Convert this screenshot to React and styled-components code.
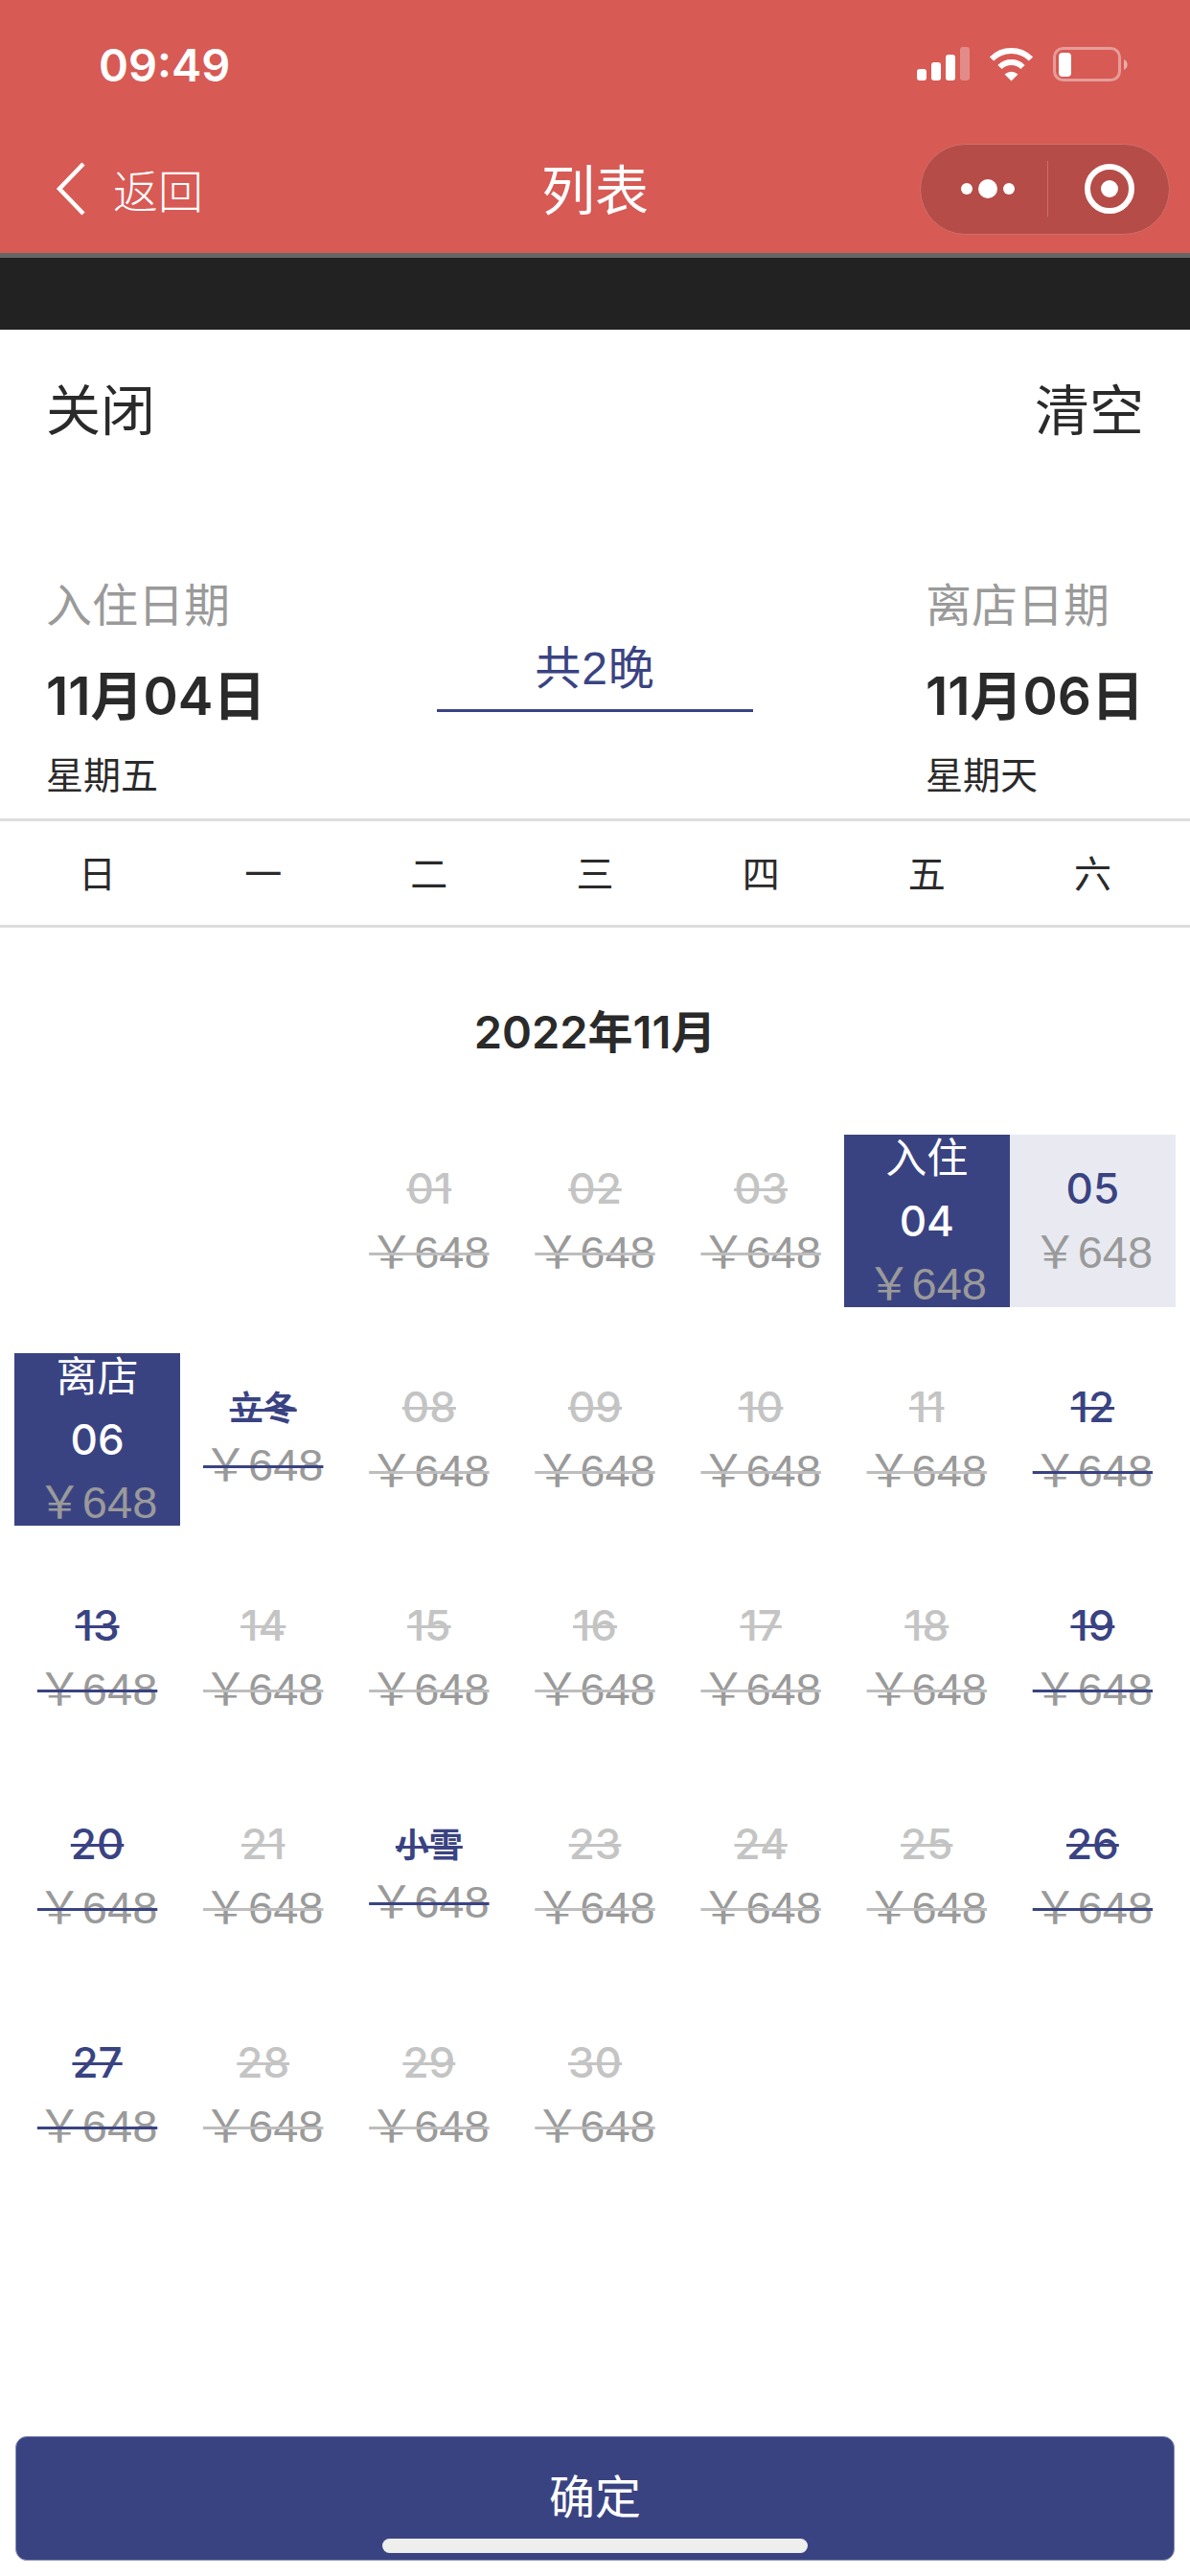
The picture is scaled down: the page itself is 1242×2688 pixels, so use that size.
import styled, { createGlobalStyle } from 'styled-components';

const NAVY = '#3a4382';
const FONT = `"Liberation Sans", "Noto Sans CJK SC", sans-serif`;
const NUM_FONT = `Inter, "Noto Sans CJK SC", sans-serif`;

const WEEK = ['日', '一', '二', '三', '四', '五', '六'];
const FESTIVALS = { 7: '立冬', 22: '小雪' };
const WEEKENDS = [12, 13, 19, 20, 26, 27];

const pad = (n) => String(n).padStart(2, '0');

export default function App() {
  const days = Array.from({ length: 30 }, (_, i) => i + 1);

  return (
    <>
      <GlobalStyle />
      <Page>
        <Header>
          <StatusBar>
            <Clock>09:49</Clock>
            <StatusIcons>
              <svg width="55" height="36" viewBox="0 0 55 36">
                <rect x="0" y="23" width="10" height="12" rx="3" fill="#fff" />
                <rect x="15" y="16" width="10" height="19" rx="3" fill="#fff" />
                <rect x="30" y="8" width="10" height="27" rx="3" fill="#fff" />
                <rect x="45" y="0" width="10" height="35" rx="3" fill="#fff" opacity="0.3" />
              </svg>
              <svg width="47" height="36" viewBox="0 0 47 36">
                <path d="M3 12.5 A29 29 0 0 1 44 12.5" fill="none" stroke="#fff" strokeWidth="6" />
                <path d="M11.5 21 A17 17 0 0 1 35.5 21" fill="none" stroke="#fff" strokeWidth="6" />
                <path d="M16.5 28.5 Q23.5 23 30.5 28.5 L23.5 35.5 Z" fill="#fff" />
              </svg>
              <svg width="79" height="36" viewBox="0 0 79 36">
                <rect x="1.5" y="1.5" width="68" height="33" rx="9" fill="none" stroke="#fff" strokeWidth="3" opacity="0.4" />
                <rect x="6" y="6" width="13" height="25" rx="4" fill="#fff" />
                <path d="M74 13 A6 6 0 0 1 74 24 Z" fill="#fff" opacity="0.5" />
              </svg>
            </StatusIcons>
          </StatusBar>
          <NavBar>
            <BackLink>
              <svg width="32" height="56" viewBox="0 0 32 56">
                <path d="M29 2 L4 28 L29 54" fill="none" stroke="#fff" strokeWidth="4.5" />
              </svg>
              <BackText>返回</BackText>
            </BackLink>
            <NavTitle>列表</NavTitle>
            <Capsule>
              <CapsuleSide $inset={8}>
                <svg width="56" height="22" viewBox="0 0 56 22">
                  <circle cx="6" cy="11" r="6" fill="#fff" />
                  <circle cx="28" cy="11" r="10" fill="#fff" />
                  <circle cx="50" cy="11" r="6" fill="#fff" />
                </svg>
              </CapsuleSide>
              <CapsuleDivider />
              <CapsuleSide $inset={3}>
                <svg width="52" height="52" viewBox="0 0 52 52">
                  <circle cx="26" cy="26" r="23" fill="none" stroke="#fff" strokeWidth="6" />
                  <circle cx="26" cy="26" r="9" fill="#fff" />
                </svg>
              </CapsuleSide>
            </Capsule>
          </NavBar>
        </Header>
        <DarkStrip />

        <ActionRow>
          <ActionText>关闭</ActionText>
          <ActionText>清空</ActionText>
        </ActionRow>

        <StaySummary>
          <StayColumn>
            <StayLabel>入住日期</StayLabel>
            <StayDate>11月04日</StayDate>
            <StayWeekday>星期五</StayWeekday>
          </StayColumn>
          <NightsColumn>
            <NightsText>共2晚</NightsText>
          </NightsColumn>
          <StayColumn>
            <StayLabel>离店日期</StayLabel>
            <StayDate>11月06日</StayDate>
            <StayWeekday>星期天</StayWeekday>
          </StayColumn>
        </StaySummary>

        <WeekRow>
          {WEEK.map((d) => (
            <WeekDay key={d}>{d}</WeekDay>
          ))}
        </WeekRow>

        <MonthTitle>2022年11月</MonthTitle>

        <CalendarGrid>
          <div />
          <div />
          {days.map((day) => {
            if (day === 4 || day === 6) {
              return (
                <DayCell key={day} $bg={NAVY}>
                  <EdgeLabel>{day === 4 ? '入住' : '离店'}</EdgeLabel>
                  <DayNumber $color="#fff">{pad(day)}</DayNumber>
                  <TightPrice>￥648</TightPrice>
                </DayCell>
              );
            }
            if (day === 5) {
              return (
                <DayCell key={day} $bg="#e9eaf1">
                  <DayNumber $color={NAVY}>{pad(day)}</DayNumber>
                  <Price>￥648</Price>
                </DayCell>
              );
            }
            if (FESTIVALS[day]) {
              return (
                <DayCell key={day}>
                  <FestivalName>{FESTIVALS[day]}</FestivalName>
                  <TightPrice $strike={NAVY}>￥648</TightPrice>
                </DayCell>
              );
            }
            const bookable = WEEKENDS.includes(day);
            return (
              <DayCell key={day}>
                <DayNumber $color={bookable ? NAVY : '#c4c4c4'} $strike={bookable ? NAVY : '#c4c4c4'}>
                  {pad(day)}
                </DayNumber>
                <Price $strike={bookable ? NAVY : '#bdbdbd'}>￥648</Price>
              </DayCell>
            );
          })}
        </CalendarGrid>

        <ConfirmButton>确定</ConfirmButton>
        <HomeIndicator />
      </Page>
    </>
  );
}

const GlobalStyle = createGlobalStyle`
  html, body {
    margin: 0;
    padding: 0;
    background: #fff;
  }
  * {
    box-sizing: border-box;
  }
`;

const Page = styled.div`
  position: relative;
  display: flex;
  flex-direction: column;
  width: 1242px;
  height: 2688px;
  overflow: hidden;
  background: #fff;
  font-family: ${FONT};
  color: #222;
`;

const Header = styled.header`
  height: 269px;
  background: #d75a55;
  border-bottom: 5px solid #666;
  color: #fff;
`;

const StatusBar = styled.div`
  display: flex;
  justify-content: space-between;
  align-items: flex-start;
  height: 136px;
  padding: 49px 64px 0 103px;
`;

const Clock = styled.span`
  font-family: ${NUM_FONT};
  font-size: 47px;
  font-weight: 600;
  line-height: 38px;
`;

const StatusIcons = styled.div`
  display: flex;
  align-items: flex-start;
  gap: 20px;
`;

const NavBar = styled.nav`
  display: grid;
  grid-template-columns: 1fr auto 1fr;
  align-items: center;
  height: 128px;
  padding: 0 21px 6px;
`;

const BackLink = styled.div`
  display: flex;
  align-items: center;
  gap: 28px;
  margin-left: 37px;
`;

const BackText = styled.span`
  padding-bottom: 2px;
  font-size: 47px;
  font-weight: 300;
`;

const NavTitle = styled.h1`
  margin: 0 0 6px;
  font-size: 56px;
  font-weight: 400;
`;

const Capsule = styled.div`
  justify-self: end;
  display: flex;
  align-items: center;
  width: 261px;
  height: 95px;
  border-radius: 48px;
  background: #b54c48;
  border: 1px solid #d0706b;
`;

const CapsuleSide = styled.div`
  flex: 1;
  display: flex;
  justify-content: center;
  align-items: center;
  padding-left: ${(p) => p.$inset || 0}px;
`;

const CapsuleDivider = styled.div`
  width: 1px;
  height: 58px;
  background: #cf6f6a;
`;

const DarkStrip = styled.div`
  height: 75px;
  background: #222;
`;

const ActionRow = styled.div`
  display: flex;
  justify-content: space-between;
  align-items: center;
  height: 166px;
  padding: 0 48px 6px;
`;

const ActionText = styled.span`
  font-size: 57px;
  color: #2a2a2a;
`;

const StaySummary = styled.section`
  display: grid;
  grid-template-columns: 1fr 330px 1fr;
  height: 347px;
  padding: 98px 48px 0;
  border-bottom: 3px solid #ddd;

  & > :last-child {
    justify-self: end;
  }
`;

const StayColumn = styled.div`
  display: flex;
  flex-direction: column;
`;

const StayLabel = styled.span`
  font-size: 48px;
  line-height: 50px;
  color: #9a9a9a;
`;

const StayDate = styled.span`
  margin-top: 35px;
  font-family: ${NUM_FONT};
  font-size: 55px;
  font-weight: 600;
  line-height: 66px;
  color: #2a2a2a;
  white-space: nowrap;
`;

const StayWeekday = styled.span`
  margin-top: 26px;
  font-size: 39px;
  line-height: 50px;
  color: #2a2a2a;
`;

const NightsColumn = styled.div`
  display: flex;
  justify-content: center;
  align-self: start;
  height: 135px;
`;

const NightsText = styled.div`
  align-self: flex-end;
  width: 100%;
  padding-bottom: 17px;
  border-bottom: 3px solid ${NAVY};
  font-size: 48px;
  line-height: 51px;
  letter-spacing: 1px;
  color: ${NAVY};
  text-align: center;
`;

const WeekRow = styled.div`
  display: grid;
  grid-template-columns: repeat(7, 1fr);
  align-items: center;
  height: 111px;
  padding: 0 15px 5px;
  border-bottom: 3px solid #ddd;
`;

const WeekDay = styled.span`
  font-size: 39px;
  text-align: center;
  color: #2a2a2a;
`;

const MonthTitle = styled.h2`
  display: flex;
  justify-content: center;
  align-items: center;
  height: 216px;
  margin: 0;
  padding-bottom: 6px;
  font-family: ${NUM_FONT};
  font-size: 47px;
  font-weight: 600;
  color: #2a2a2a;
`;

const CalendarGrid = styled.div`
  display: grid;
  grid-template-columns: repeat(7, 1fr);
  grid-auto-rows: 180px;
  row-gap: 48px;
  padding: 0 15px;
`;

const DayCell = styled.div`
  display: flex;
  flex-direction: column;
  align-items: center;
  justify-content: center;
  background: ${(p) => p.$bg || 'transparent'};
`;

const EdgeLabel = styled.span`
  flex: none;
  font-size: 43px;
  line-height: 65px;
  color: #fff;
`;

const DayNumber = styled.span`
  flex: none;
  font-family: ${NUM_FONT};
  font-size: 44px;
  font-weight: 500;
  line-height: 65px;
  color: ${(p) => p.$color};
  text-decoration: ${(p) => (p.$strike ? `line-through ${p.$strike} 3px` : 'none')};
`;

const FestivalName = styled.span`
  flex: none;
  font-size: 35px;
  font-weight: 700;
  line-height: 52px;
  color: ${NAVY};
  text-decoration: line-through ${NAVY} 3px;
`;

const Price = styled.span`
  flex: none;
  font-size: 47px;
  line-height: 68px;
  color: #9a9a9a;
  text-decoration: ${(p) => (p.$strike ? `line-through ${p.$strike} 3px` : 'none')};
`;

const TightPrice = styled(Price)`
  line-height: 65px;
`;

const ConfirmButton = styled.button`
  display: flex;
  justify-content: center;
  align-items: center;
  width: 1210px;
  height: 130px;
  margin: auto 16px 16px;
  padding: 0 0 10px;
  border: 1px solid #8a91bb;
  border-radius: 12px;
  background: ${NAVY};
  color: #fff;
  font-family: ${FONT};
  font-size: 48px;
`;

const HomeIndicator = styled.div`
  position: absolute;
  left: 399px;
  bottom: 24px;
  width: 444px;
  height: 15px;
  border-radius: 8px;
  background: #eeeeec;
`;
